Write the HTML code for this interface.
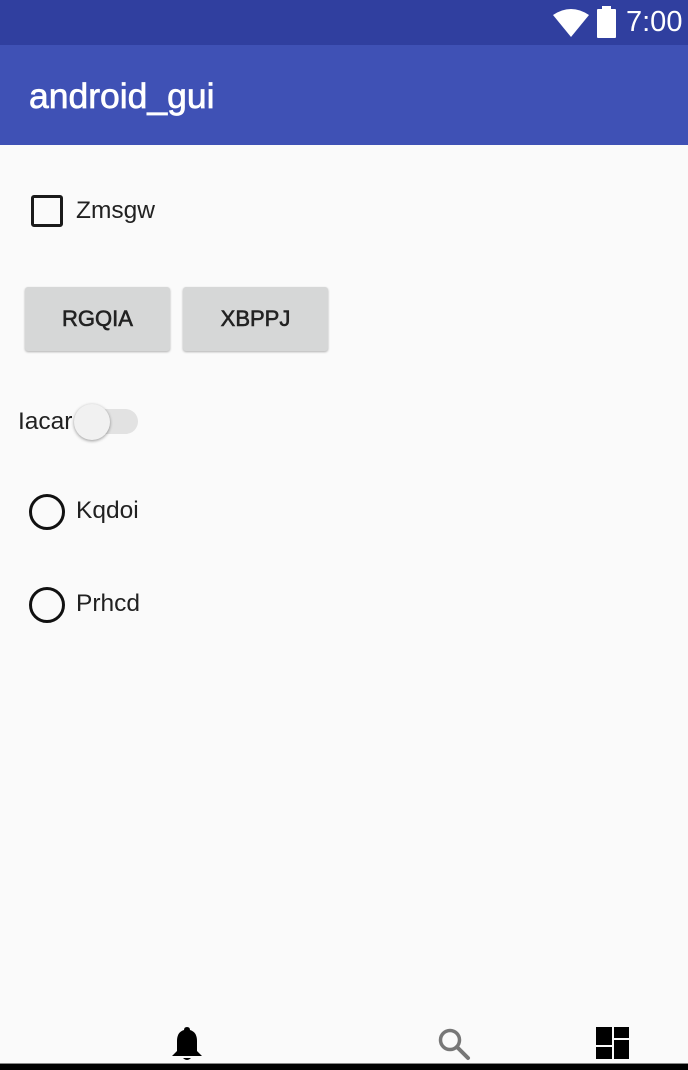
<!DOCTYPE html>
<html><head><meta charset="utf-8"><style>
*{margin:0;padding:0;box-sizing:border-box}
body{width:688px;height:1070px;background:#fafafa;font-family:"Liberation Sans",sans-serif;position:relative;overflow:hidden}
.a{position:absolute}
.sb{left:0;top:0;width:688px;height:45px;background:#303f9f}
.ab{left:0;top:45px;width:688px;height:100px;background:#3f51b5}
.t{color:#fff}
.lbl{font-size:24.5px;color:#212121}
.btn{background:#d6d7d7;border-radius:3px;box-shadow:0 1px 2px rgba(0,0,0,.3);font-size:22px;color:#222;text-align:center;line-height:64px;height:64px;-webkit-text-stroke:0.6px #222}
</style></head><body>
<div class="a sb"></div>
<svg class="a" style="left:553px;top:9px" width="36" height="28" viewBox="0 0 36 28"><path d="M0 6 Q18 -6 36 6 L18 28 Z" fill="#fff"/></svg>
<div class="a" style="left:597px;top:9px;width:19px;height:29px;background:#fff;border-radius:1px"></div>
<div class="a" style="left:602px;top:6px;width:9px;height:4px;background:#fff"></div>
<div class="a t" style="left:626px;top:6px;font-size:29px">7:00</div>
<div class="a ab"></div>
<div class="a t" style="left:29px;top:76px;font-size:35.5px;-webkit-text-stroke:0.7px #fff">android_gui</div>

<div class="a" style="left:31px;top:195px;width:32px;height:32px;border:3.5px solid #1a1a1a;border-radius:3px"></div>
<div class="a lbl" style="left:76px;top:197px">Zmsgw</div>

<div class="a btn" style="left:25px;top:287px;width:145px">RGQIA</div>
<div class="a btn" style="left:183px;top:287px;width:145px">XBPPJ</div>

<div class="a lbl" style="left:18px;top:408px">Iacar</div>
<div class="a" style="left:78px;top:409px;width:60px;height:25px;border-radius:13px;background:#e2e2e2"></div>
<div class="a" style="left:74px;top:404px;width:36px;height:36px;border-radius:50%;background:#f1f1f1;box-shadow:0 1px 3px rgba(0,0,0,.4)"></div>

<div class="a" style="left:29px;top:494px;width:36px;height:36px;border:3.5px solid #111;border-radius:50%"></div>
<div class="a lbl" style="left:76px;top:497px">Kqdoi</div>
<div class="a" style="left:29px;top:587px;width:36px;height:36px;border:3.5px solid #111;border-radius:50%"></div>
<div class="a lbl" style="left:76px;top:590px">Prhcd</div>

<svg class="a" style="left:172px;top:1026px" width="30" height="36" viewBox="0 0 30 36"><path d="M12 4 Q12 1 15 1 Q18 1 18 4 Q25 6 25 15 L25 25 L30 30 L0 30 L5 25 L5 15 Q5 6 12 4Z" fill="#000"/><path d="M11 32 L19 32 Q15 36 11 32Z" fill="#000"/></svg>
<svg class="a" style="left:437px;top:1027px" width="34" height="34" viewBox="0 0 34 34"><circle cx="13" cy="13" r="9.5" fill="none" stroke="#777" stroke-width="3.5"/><path d="M20 20 L31 31" stroke="#777" stroke-width="4" stroke-linecap="round"/></svg>
<div class="a" style="left:596px;top:1027px;width:16px;height:18px;background:#000"></div>
<div class="a" style="left:614px;top:1027px;width:15px;height:11px;background:#000"></div>
<div class="a" style="left:596px;top:1047px;width:16px;height:12px;background:#000"></div>
<div class="a" style="left:614px;top:1040px;width:15px;height:19px;background:#000"></div>
<div class="a" style="left:0;top:1063px;width:688px;height:1px;background:#888"></div>
<div class="a" style="left:0;top:1064px;width:688px;height:6px;background:#000"></div>
</body></html>
